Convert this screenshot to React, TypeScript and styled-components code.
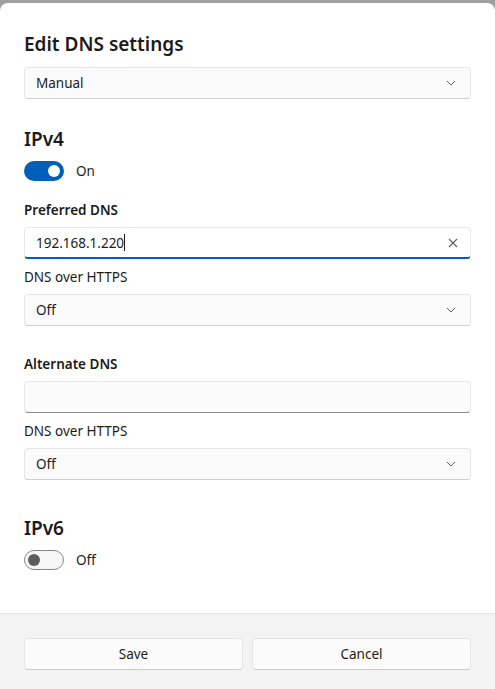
import React from 'react'
import styled, { createGlobalStyle } from 'styled-components'

const GlobalStyle = createGlobalStyle`
  html, body {
    margin: 0;
    padding: 0;
    background: #9f9f9f;
    font-family: "Noto Sans", "Open Sans", sans-serif;
    color: #1b1b1b;
    overflow: hidden;
  }
`

const Dialog = styled.div`
  margin-top: 3px;
  height: 686px;
  background: #ffffff;
  border-radius: 8px 8px 0 0;
  display: flex;
  flex-direction: column;
  overflow: hidden;
`

const Body = styled.div`
  padding: 27px 24px 0;
  display: flex;
  flex-direction: column;
  height: 610px;
  flex-shrink: 0;
  box-sizing: border-box;
`

const Title = styled.h1`
  margin: 0 0 9px;
  font-size: 19px;
  line-height: 28px;
  font-weight: 600;
`

const SectionHeading = styled.h2<{ $top: number }>`
  margin: ${(p) => p.$top}px 0 8px;
  font-size: 19px;
  line-height: 28px;
  font-weight: 600;
`

const Label = styled.div<{ $bold?: boolean; $top: number }>`
  margin: ${(p) => p.$top}px 0 7px;
  font-size: 13.5px;
  line-height: 20px;
  font-weight: ${(p) => (p.$bold ? 600 : 400)};
`

const Field = styled.div<{ $focused?: boolean }>`
  height: 32px;
  box-sizing: border-box;
  display: flex;
  align-items: center;
  padding: 0 12px 0 11px;
  border: 1px solid #e8e8e8;
  border-bottom: ${(p) => (p.$focused ? '2px solid #005fb8' : '1px solid #8a8a8a')};
  border-radius: 4px;
  background: ${(p) => (p.$focused ? '#ffffff' : '#fbfbfb')};
  font-size: 13.5px;
`

const Select = styled.div`
  height: 32px;
  box-sizing: border-box;
  display: flex;
  align-items: center;
  justify-content: space-between;
  padding: 0 14px 0 11px;
  border: 1px solid #e6e6e6;
  border-bottom-color: #cfcfcf;
  border-radius: 4px;
  background: #fbfbfb;
  font-size: 13.5px;
`

const FieldText = styled.span`
  flex: 1;
  display: flex;
  align-items: center;
`

const Caret = styled.span`
  display: inline-block;
  width: 1px;
  height: 17px;
  background: #1b1b1b;
`

const ToggleRow = styled.div`
  display: flex;
  align-items: center;
  gap: 12px;
  font-size: 13.5px;
  height: 20px;
`

const Track = styled.span<{ $on: boolean }>`
  width: 40px;
  height: 20px;
  box-sizing: border-box;
  border-radius: 10px;
  display: flex;
  align-items: center;
  justify-content: ${(p) => (p.$on ? 'flex-end' : 'flex-start')};
  padding: 0 4px;
  background: ${(p) => (p.$on ? '#005fb8' : '#f6f6f6')};
  border: ${(p) => (p.$on ? 'none' : '1px solid #8a8a8a')};
`

const Knob = styled.span<{ $on: boolean }>`
  width: 12px;
  height: 12px;
  border-radius: 50%;
  background: ${(p) => (p.$on ? '#ffffff' : '#5d5d5d')};
  margin-left: ${(p) => (p.$on ? 0 : -1)}px;
`

const Footer = styled.div`
  flex: 1;
  background: #f3f3f3;
  border-top: 1px solid #e5e5e5;
  padding: 24px;
  display: grid;
  grid-template-columns: 1fr 1fr;
  gap: 9px;
  align-content: start;
`

const Button = styled.button`
  height: 32px;
  border: 1px solid #e5e5e5;
  border-bottom-color: #cccccc;
  border-radius: 4px;
  background: #fbfbfb;
  font-family: inherit;
  font-size: 13.5px;
  color: #1b1b1b;
`

const Chevron = () => (
  <svg width="10" height="6" viewBox="0 0 10 6">
    <path d="M1 1l4 4 4-4" fill="none" stroke="#5f5f5f" strokeWidth="1" />
  </svg>
)

const Clear = () => (
  <svg width="10" height="10" viewBox="0 0 10 10">
    <path d="M1 1l8 8M9 1l-8 8" fill="none" stroke="#5f5f5f" strokeWidth="1.1" />
  </svg>
)

const Toggle = ({ on }: { on: boolean }) => (
  <ToggleRow>
    <Track $on={on}>
      <Knob $on={on} />
    </Track>
    {on ? 'On' : 'Off'}
  </ToggleRow>
)

const Dropdown = ({ value }: { value: string }) => (
  <Select>
    {value}
    <Chevron />
  </Select>
)

export default function App() {
  return (
    <>
      <GlobalStyle />
      <Dialog>
        <Body>
          <Title>Edit DNS settings</Title>
          <Dropdown value="Manual" />

          <SectionHeading $top={26}>IPv4</SectionHeading>
          <Toggle on />

          <Label $bold $top={19}>Preferred DNS</Label>
          <Field $focused>
            <FieldText>
              192.168.1.220
              <Caret />
            </FieldText>
            <Clear />
          </Field>
          <Label $top={8}>DNS over HTTPS</Label>
          <Dropdown value="Off" />

          <Label $bold $top={28}>Alternate DNS</Label>
          <Field />
          <Label $top={8}>DNS over HTTPS</Label>
          <Dropdown value="Off" />

          <SectionHeading $top={34}>IPv6</SectionHeading>
          <Toggle on={false} />
        </Body>
        <Footer>
          <Button>Save</Button>
          <Button>Cancel</Button>
        </Footer>
      </Dialog>
    </>
  )
}
